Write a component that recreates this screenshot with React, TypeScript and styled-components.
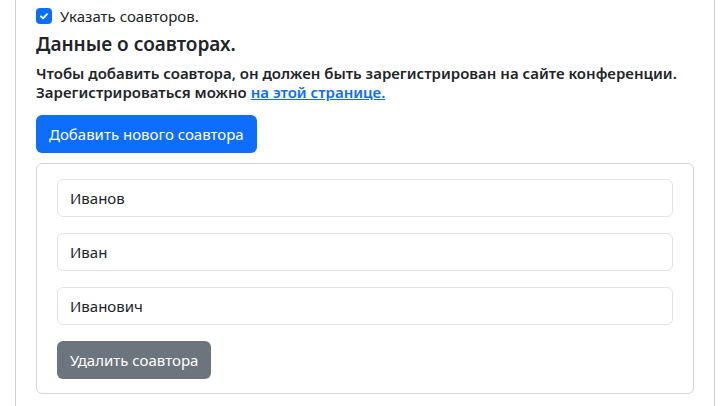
import { FunctionComponent } from "react"
import styled, { createGlobalStyle } from "styled-components"

const GlobalStyle = createGlobalStyle`
  body {
    margin: 0;
    background: #fff;
    color: #212529;
    font-family: "Noto Sans", "Open Sans", sans-serif;
    font-size: 16px;
  }
`

const StyledPage = styled.div`
  box-sizing: border-box;
  width: 700px;
  min-height: 406px;
  margin-left: 15px;
  padding: 4px 20px 0 20px;
  border-left: 1px solid #d0d0d0;
  border-right: 1px solid #d0d0d0;
`

const StyledCheckRow = styled.label`
  display: flex;
  align-items: center;
  gap: 8px;
  height: 24px;
  line-height: 24px;
  font-size: 15px;
  margin-bottom: 4px;
`

const StyledCheckBox = styled.span`
  display: flex;
  align-items: center;
  justify-content: center;
  width: 16px;
  height: 16px;
  border-radius: 4px;
  background-color: #0d6efd;
`

const StyledHeading = styled.h5`
  margin: 0 0 8px 0;
  font-size: 19px;
  font-weight: 600;
  line-height: 24px;
`

const StyledNotice = styled.p`
  margin: 0 0 13px 0;
  font-size: 15px;
  font-weight: 600;
  line-height: 19px;

  a {
    color: #0d6efd;
    text-decoration: underline;
  }
`

const StyledButton = styled.button<{ $variant: "primary" | "secondary" }>`
  box-sizing: border-box;
  height: 38px;
  padding: 0 12px;
  border: 1px solid transparent;
  border-radius: 6px;
  background-color: ${(p) => (p.$variant === "primary" ? "#0d6efd" : "#6c757d")};
  color: #fff;
  font-family: inherit;
  font-size: 15px;
  line-height: 24px;
  cursor: pointer;
`

const StyledCard = styled.div`
  box-sizing: border-box;
  display: flex;
  flex-direction: column;
  align-items: flex-start;
  gap: 16px;
  margin-top: 10px;
  padding: 15px 20px 14px 20px;
  border: 1px solid #d5d5d5;
  border-radius: 6px;
`

const StyledInput = styled.input`
  box-sizing: border-box;
  width: 100%;
  height: 38px;
  padding: 0 12px;
  border: 1px solid #dee2e6;
  border-radius: 6px;
  color: #212529;
  font-family: inherit;
  font-size: 15px;
  outline: none;
`

interface InterfaceCoauthor {
  lastName: string
  firstName: string
  middleName: string
}

const CoauthorCard: FunctionComponent<InterfaceCoauthor> = ({ lastName, firstName, middleName }) => {
  return (
    <StyledCard>
      <StyledInput defaultValue={lastName} />
      <StyledInput defaultValue={firstName} />
      <StyledInput defaultValue={middleName} />
      <StyledButton type="button" $variant="secondary">
        Удалить соавтора
      </StyledButton>
    </StyledCard>
  )
}

const App: FunctionComponent = () => {
  return (
    <>
      <GlobalStyle />
      <StyledPage>
        <StyledCheckRow>
          <StyledCheckBox>
            <svg width="12" height="12" viewBox="0 0 20 20">
              <path d="M5 10.5l3.5 3.5l6.5-7" fill="none" stroke="#fff" strokeWidth="3" strokeLinecap="round" strokeLinejoin="round" />
            </svg>
          </StyledCheckBox>
          Указать соавторов.
        </StyledCheckRow>
        <StyledHeading>Данные о соавторах.</StyledHeading>
        <StyledNotice>
          Чтобы добавить соавтора, он должен быть зарегистрирован на сайте конференции.
          <br />
          Зарегистрироваться можно <a href="#">на этой странице.</a>
        </StyledNotice>
        <StyledButton type="button" $variant="primary">
          Добавить нового соавтора
        </StyledButton>
        <CoauthorCard lastName="Иванов" firstName="Иван" middleName="Иванович" />
      </StyledPage>
    </>
  )
}

export default App
